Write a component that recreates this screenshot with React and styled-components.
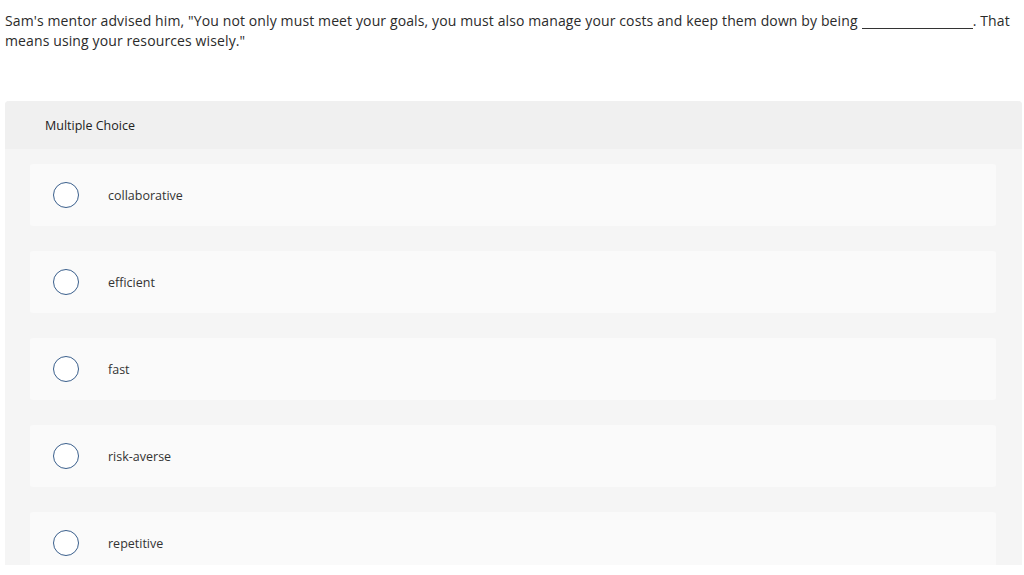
import React from 'react'
import styled, { createGlobalStyle } from 'styled-components'

const GlobalStyle = createGlobalStyle`
  html, body {
    margin: 0;
    padding: 0;
    background: #fff;
    overflow: hidden;
  }
  body {
    font-family: 'Open Sans', 'Liberation Sans', sans-serif;
    color: #333;
  }
`

const Page = styled.div`
  width: 1024px;
  height: 575px;
  box-sizing: border-box;
  padding: 11px 2px 0 5px;
  display: flex;
  flex-direction: column;
`

const Prompt = styled.p`
  margin: 0;
  font-size: 14px;
  line-height: 20px;
  letter-spacing: 0.12px;
  color: #2b2b2b;
`

const Blank = styled.span`
  display: inline-block;
  width: 111px;
  height: 14px;
  border-bottom: 1px solid #333;
  vertical-align: -3px;
  margin-left: 4px;
`

const Panel = styled.section`
  margin-top: 50px;
  height: 464px;
  overflow: hidden;
  border-radius: 4px 4px 0 0;
  background: #f5f5f5;
  display: flex;
  flex-direction: column;
`

const PanelHeader = styled.header`
  height: 48px;
  flex: none;
  background: #f0f0f0;
  display: flex;
  align-items: center;
  padding-left: 40px;
  font-size: 12.5px;
  color: #222;
`

const OptionList = styled.ul`
  list-style: none;
  margin: 0;
  padding: 15px 26px 0 25px;
  display: flex;
  flex-direction: column;
  gap: 25px;
`

const OptionCard = styled.li`
  height: 62px;
  flex: none;
  background: #fafafa;
  border-radius: 3px;
  display: flex;
  align-items: center;
  padding-left: 23px;
  font-size: 12.5px;
  color: #333;
`

const Radio = styled.span`
  width: 24px;
  height: 24px;
  border-radius: 50%;
  border: 1.5px solid #3a5f8c;
  background: #fff;
  flex: none;
  margin-right: 29px;
`

const options = ['collaborative', 'efficient', 'fast', 'risk-averse', 'repetitive']

export default function App() {
  return (
    <>
      <GlobalStyle />
      <Page>
        <Prompt>
          Sam's mentor advised him, "You not only must meet your goals, you must also manage your costs and keep them down by being
          <Blank />. That means using your resources wisely."
        </Prompt>
        <Panel>
          <PanelHeader>Multiple Choice</PanelHeader>
          <OptionList>
            {options.map(opt => (
              <OptionCard key={opt}>
                <Radio />
                {opt}
              </OptionCard>
            ))}
          </OptionList>
        </Panel>
      </Page>
    </>
  )
}
